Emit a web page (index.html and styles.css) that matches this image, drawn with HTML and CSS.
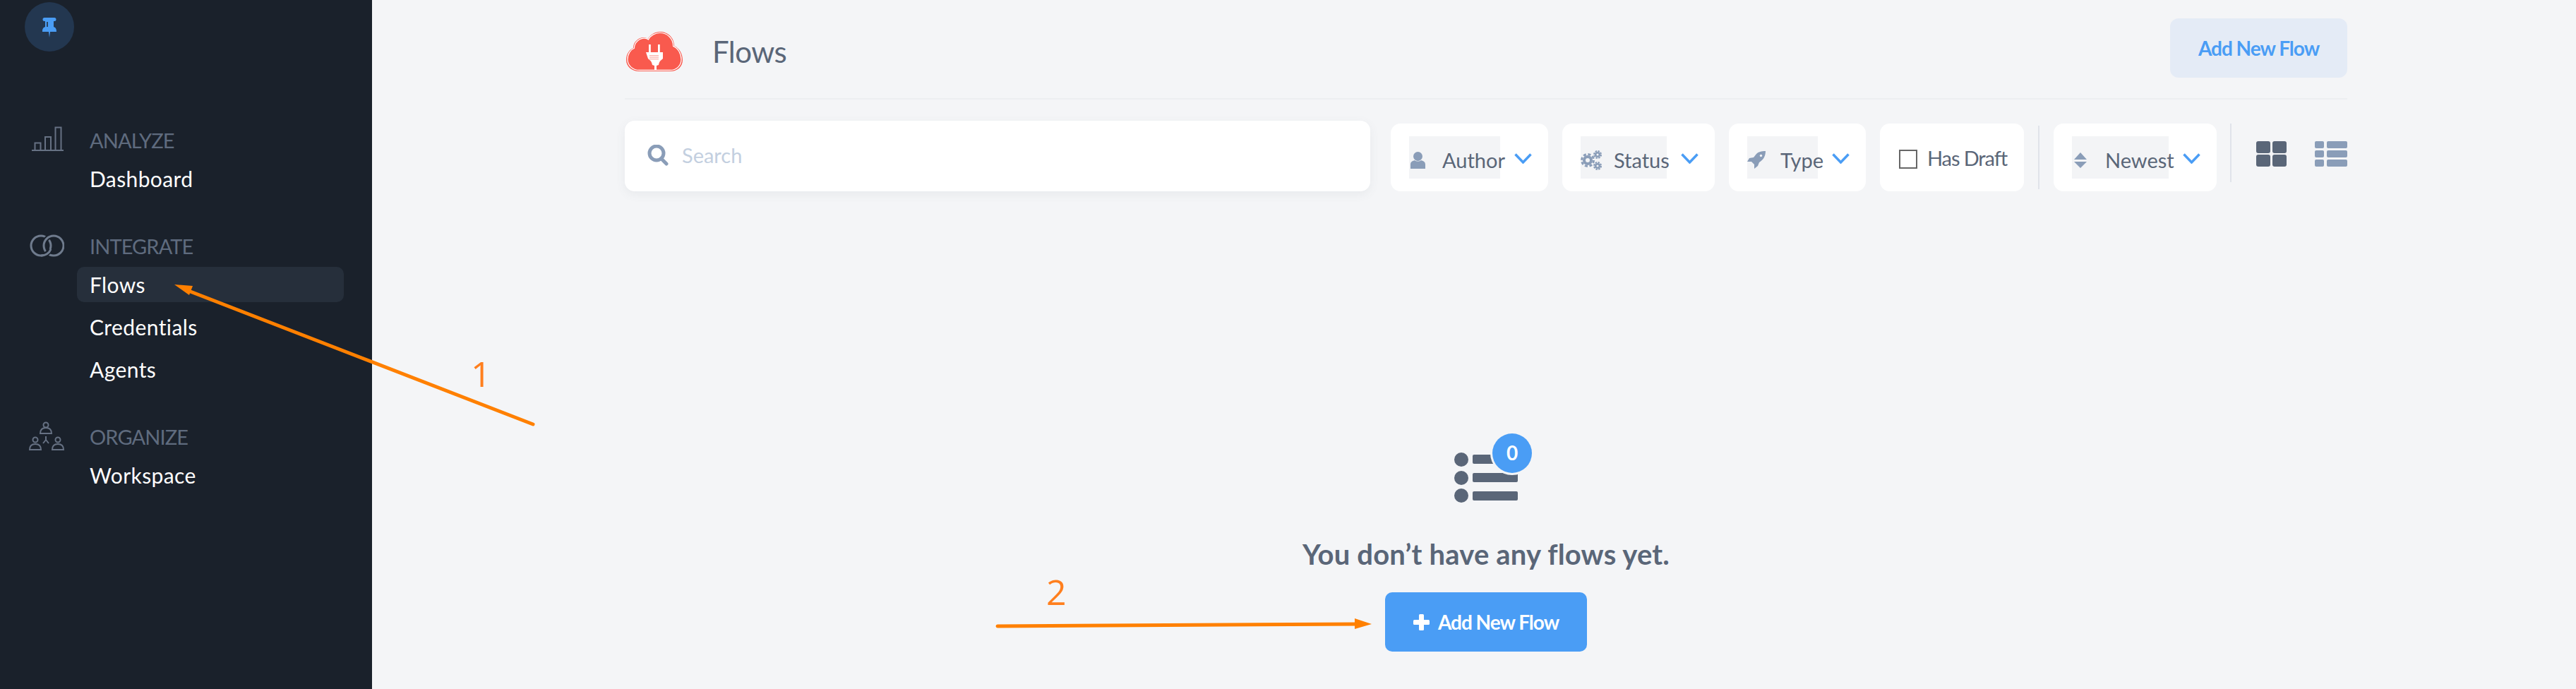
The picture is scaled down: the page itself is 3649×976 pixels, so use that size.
FILE: index.html
```html
<!DOCTYPE html>
<html lang="en">
<head>
    <meta charset="UTF-8">
    <title>Flows</title>
    <link rel="stylesheet" href="styles.css">
</head>
<body>
    <div class="app">
        <aside class="sidebar">
            <div class="logo">
                <svg width="70" height="70" viewBox="0 0 70 70"><path fill="#4a9df5" d="M28 22h14a1.500 1.500 0 0 1 0 5h-1v8c3 1 4 3 4 7H36l-1 8-1-8H25c0-4 1-6 4-7v-8h-1a1.500 1.500 0 0 1 0-5z"/><path fill="#2a4463" d="M31 28h2v7h-2z"/></svg>
            </div>
            <nav class="nav">
                <div class="nav-label">
                    <span class="nav-icon">
                        <svg width="50" height="40" viewBox="0 0 50 40" fill="none" stroke="#667183" stroke-width="2"><path d="M4 35h45M8.500 34V24.500h8V34M23 34V16h8v18M37.500 34V2.500h8V34"/></svg>
                    </span>
                    <span class="nav-label-text">ANALYZE</span>
                </div>
                <a class="nav-item">Dashboard</a>

                <div class="nav-label group-gap">
                    <span class="nav-icon">
                        <svg width="50" height="40" viewBox="0 0 50 40" fill="none" stroke="#6f7b8d" stroke-width="3">
                            <circle cx="17" cy="20" r="14"/>
                            <path stroke="#1a212b" stroke-width="7" d="M31 6.600A14 14 0 0 0 22 15"/>
                            <circle cx="35" cy="20" r="14"/>
                            <path stroke="#1a212b" stroke-width="7" d="M30 25A14 14 0 0 1 21 33.400"/>
                            <path d="M31 25A14 14 0 0 1 17 34"/>
                        </svg>
                    </span>
                    <span class="nav-label-text">INTEGRATE</span>
                </div>
                <a class="nav-item active">Flows</a>
                <a class="nav-item">Credentials</a>
                <a class="nav-item">Agents</a>

                <div class="nav-label group-gap">
                    <span class="nav-icon">
                        <svg width="50" height="44" viewBox="0 0 50 44" fill="none" stroke="#667183" stroke-width="2"><circle cx="24" cy="6" r="3.500"/><path d="M16 18c0-7 4-8 8-8s8 1 8 8z"/><circle cx="9" cy="27" r="3.500"/><path d="M1 41c0-7 4-8 8-8s8 1 8 8z"/><circle cx="41" cy="27" r="3.500"/><path d="M33 41c0-7 4-8 8-8s8 1 8 8z"/><path d="M24 22v5l-4 5M24 27l4 5"/></svg>
                    </span>
                    <span class="nav-label-text">ORGANIZE</span>
                </div>
                <a class="nav-item">Workspace</a>
            </nav>
        </aside>

        <main class="main">
            <header class="page-header">
                <div class="page-title">
                    <svg class="cloud" width="80" height="56" viewBox="0 0 80 56">
                        <path fill="#f95a4e" d="M18 56C8 56 0 49 0 40 0 31 5 25 10 23 10 14 18 8 25 8c2 0 5 1 6 2C34 4 41 0 48 0c11 0 20 8 20 20 7 3 12 11 12 20 0 9-7 16-17 16z"/>
                        <path fill="none" stroke="#fff" stroke-width="1.300" transform="translate(1.900 1.500) scale(.952 .946)" d="M18 56C8 56 0 49 0 40 0 31 5 25 10 23 10 14 18 8 25 8c2 0 5 1 6 2C34 4 41 0 48 0c11 0 20 8 20 20 7 3 12 11 12 20 0 9-7 16-17 16z"/>
                        <path fill="#fff" d="M32 18h2.800v11H32zM45 18h2.800v11H45zM28 29h24v9c-2 2-5 3-6 9l-3 1v7h-3v-7l-3-1c-1-6-4-7-6-9z"/>
                        <path fill="#fbb3ac" d="M33 33h13v1.300H33zM33 35.500h13v1.300H33zM33 38h13v1.300H33z"/>
                    </svg>
                    <h1>Flows</h1>
                </div>
                <button class="btn-soft">Add New Flow</button>
            </header>

            <div class="toolbar">
                <div class="search">
                    <svg width="30" height="30" viewBox="0 0 30 30" fill="none" stroke="#8a9db8" stroke-width="5"><circle cx="13" cy="12" r="10"/><path stroke-linecap="round" d="M20 20l7 7"/></svg>
                    <span class="search-text">Search</span>
                </div>

                <div class="filter">
                    <div class="filter-box author">
                        <span class="filter-icon">
                            <svg class="pad-2" width="21" height="24" viewBox="0 0 21 24" fill="#8a9db8"><ellipse cx="10.500" cy="6.500" rx="6.500" ry="6.500"/><path d="M0 24v-6c0-4 3-5 6-6 2 2 7 2 9 0 3 1 6 2 6 6v6z"/></svg>
                        </span>
                        <span>Author</span>
                    </div>
                    <svg class="chevron" width="25" height="15" viewBox="0 0 25 15"><path d="M1.500 1.500l11 11.500 11-11.500"/></svg>
                </div>

                <div class="filter">
                    <div class="filter-box status">
                        <span class="filter-icon">
                            <svg width="31" height="28" viewBox="0 0 31 28" fill="none" stroke="#8a9db8">
                                <circle cx="10" cy="14" r="5" stroke-width="4"/>
                                <circle cx="10" cy="14" r="8.500" stroke-width="3" stroke-dasharray="4 2.700"/>
                                <circle cx="24" cy="6" r="2.800" stroke-width="2.600"/>
                                <circle cx="24" cy="6" r="5" stroke-width="2" stroke-dasharray="2.500 1.400"/>
                                <circle cx="24" cy="22" r="2.800" stroke-width="2.600"/>
                                <circle cx="24" cy="22" r="5" stroke-width="2" stroke-dasharray="2.500 1.400"/>
                            </svg>
                        </span>
                        <span>Status</span>
                    </div>
                    <svg class="chevron" width="25" height="15" viewBox="0 0 25 15"><path d="M1.500 1.500l11 11.500 11-11.500"/></svg>
                </div>

                <div class="filter">
                    <div class="filter-box type">
                        <span class="filter-icon">
                            <svg width="27" height="25" viewBox="0 0 27 25" fill="#8a9db8"><path d="M26 0C20 0 16 1 13 4L9 9 3 10 0 15h6l4 4v6l5-4 2-5c5-3 9-8 9-16z"/><circle cx="19.500" cy="6.500" r="1.700" fill="#f3f4f6"/></svg>
                        </span>
                        <span>Type</span>
                    </div>
                    <svg class="chevron" width="25" height="15" viewBox="0 0 25 15"><path d="M1.500 1.500l11 11.500 11-11.500"/></svg>
                </div>

                <label class="draft">
                    <span class="checkbox"></span>
                    <span class="draft-text">Has Draft</span>
                </label>

                <span class="divider"></span>

                <div class="filter">
                    <div class="filter-box newest">
                        <span class="filter-icon">
                            <svg class="pad-3" width="18" height="22" viewBox="0 0 18 22" fill="#8a9db8"><path d="M9 0l9 10H0zM0 13h18l-9 9z"/></svg>
                        </span>
                        <span>Newest</span>
                    </div>
                    <svg class="chevron" width="25" height="15" viewBox="0 0 25 15"><path d="M1.500 1.500l11 11.500 11-11.500"/></svg>
                </div>

                <span class="divider short"></span>

                <svg class="view-grid" width="43" height="36" viewBox="0 0 43 36" fill="#5a6678">
                    <rect width="20" height="17" rx="3"/><rect x="23" width="20" height="17" rx="3"/>
                    <rect y="19" width="20" height="17" rx="3"/><rect x="23" y="19" width="20" height="17" rx="3"/>
                </svg>
                <svg class="view-list" width="46" height="36" viewBox="0 0 46 36" fill="#8a9db8">
                    <rect width="13" height="10" rx="2"/><rect x="17" width="29" height="10" rx="2"/>
                    <rect y="13" width="13" height="10" rx="2"/><rect x="17" y="13" width="29" height="10" rx="2"/>
                    <rect y="26" width="13" height="10" rx="2"/><rect x="17" y="26" width="29" height="10" rx="2"/>
                </svg>
            </div>

            <section class="empty">
                <div class="empty-icon">
                    <svg width="90" height="71" viewBox="0 0 90 71" fill="#5a6678">
                        <circle cx="10" cy="10" r="10"/><circle cx="10" cy="36" r="10"/><circle cx="10" cy="61" r="10"/>
                        <rect x="26" y="3" width="64" height="13" rx="2"/><rect x="26" y="29" width="64" height="13" rx="2"/><rect x="26" y="55" width="64" height="13" rx="2"/>
                    </svg>
                    <span class="badge">0</span>
                </div>
                <h2>You don’t have any flows yet.</h2>
                <button class="btn-primary">
                    <svg width="23" height="23" viewBox="0 0 23 23" fill="#fff"><rect x="8" width="7" height="23" rx="1.500"/><rect y="8" width="23" height="7" rx="1.500"/></svg>
                    Add New Flow
                </button>
            </section>
        </main>
    </div>

    <svg class="arrows" width="3649" height="976" viewBox="0 0 3649 976">
        <path class="arrow-line" d="M755 601L262 410"/>
        <path class="arrow-head" d="M247 403l26 2-5 13z"/>
        <path class="arrow-line" d="M1413 887L1925 884"/>
        <path class="arrow-head" d="M1943 884l-24-8v15z"/>
    </svg>
    <span class="step step-one">1</span>
    <span class="step step-two">2</span>
</body>
</html>
```

FILE: styles.css
```css
* {
    box-sizing: border-box;
}

html, body {
    margin: 0;
    height: 976px;
    overflow: hidden;
}

body {
    position: relative;
    font-family: Lato, "Open Sans", sans-serif;
    font-size: 29px;
    color: #5a6678;
    background-color: #f4f5f7;
}

.app {
    display: flex;
    height: 976px;
}

/* sidebar */
.sidebar {
    width: 527px;
    flex-shrink: 0;
    background-color: #1a212b;
    padding-top: 3px;
}

.logo {
    width: 70px;
    height: 70px;
    margin-left: 35px;
    border-radius: 50%;
    background-color: #233750;
}

.logo svg {
    display: block;
}

.nav {
    padding-top: 105px;
    display: flex;
    flex-direction: column;
    gap: 10px;
}

.nav-label {
    display: flex;
    align-items: center;
    height: 40px;
    padding-left: 41px;
    color: #5f6b7e;
}

.nav-label-text {
    letter-spacing: -0.9px;
}

.nav-label.group-gap {
    margin-top: 40px;
}

.nav-icon {
    display: flex;
    width: 86px;
    flex-shrink: 0;
}

.nav-item {
    display: block;
    height: 50px;
    line-height: 50px;
    width: 378px;
    margin-left: 109px;
    padding-left: 18px;
    color: #fff;
    font-size: 30px;
    letter-spacing: 0.4px;
    border-radius: 10px;
}

.nav-item.active {
    background-color: #262f3b;
}

/* header */
.main {
    flex: 1;
    padding: 0 324px 0 358px;
}

.page-header {
    display: flex;
    justify-content: space-between;
    align-items: flex-start;
    height: 141px;
    padding-top: 26px;
    border-bottom: 2px solid #eceef1;
}

.page-title {
    display: flex;
    align-items: center;
    gap: 42px;
    padding: 19px 0 0 2px;
}

.cloud {
    display: block;
}

h1 {
    margin: 0;
    font-size: 42px;
    font-weight: 400;
    line-height: 56px;
    letter-spacing: -0.5px;
}

.btn-soft {
    width: 251px;
    height: 84px;
    border: none;
    border-radius: 12px;
    background-color: #e4ebf6;
    color: #4a9df5;
    font-family: inherit;
    font-size: 28px;
    font-weight: 700;
    letter-spacing: -1px;
}

/* toolbar */
.toolbar {
    display: flex;
    align-items: flex-end;
    padding-top: 30px;
}

.search {
    display: flex;
    align-items: center;
    gap: 19px;
    width: 1056px;
    height: 100px;
    padding: 0 0 3px 32px;
    margin-right: 29px;
    background-color: #fff;
    border-radius: 14px;
    box-shadow: 0 4px 14px rgba(90, 102, 120, 0.08);
    color: #c3cfdf;
}

.filter {
    display: flex;
    align-items: center;
    height: 96px;
    padding: 0 23px 0 26px;
    margin-right: 20px;
    background-color: #fff;
    border-radius: 14px;
}

.filter-box {
    display: flex;
    align-items: center;
    height: 60px;
    padding-top: 7px;
    background-color: #f3f4f6;
    white-space: nowrap;
}

.filter-box.author { width: 129px; }
.filter-box.status { width: 122px; }
.filter-box.type { width: 100px; }
.filter-box.newest { width: 137px; }

.filter-icon {
    display: flex;
    width: 47px;
    flex-shrink: 0;
}

.pad-2 { margin-left: 2px; }
.pad-3 { margin-left: 3px; }

.chevron {
    flex-shrink: 0;
    margin-left: 20px;
    margin-top: 3px;
    fill: none;
    stroke: #4a9df5;
    stroke-width: 3.500;
}

.draft {
    display: flex;
    align-items: center;
    gap: 14px;
    width: 204px;
    height: 96px;
    padding-left: 27px;
    background-color: #fff;
    border-radius: 14px;
}

.draft-text {
    letter-spacing: -1.1px;
}

.checkbox {
    width: 26px;
    height: 27px;
    margin-top: 5px;
    border: 2px solid #666;
    background-color: #fff;
}

.divider {
    width: 2px;
    height: 90px;
    margin: 0 20px 3px 20px;
    background-color: #e0e3ea;
}

.divider.short {
    height: 83px;
    margin: 0 35px 13px -1px;
}

.view-grid {
    margin: 0 40px 35px 0;
}

.view-list {
    margin-bottom: 35px;
}

/* empty state */
.empty {
    display: flex;
    flex-direction: column;
    align-items: center;
    padding-top: 370px;
}

.empty-icon {
    position: relative;
    width: 90px;
    height: 71px;
}

.empty-icon svg {
    display: block;
}

.badge {
    position: absolute;
    left: 54px;
    top: -27px;
    width: 56px;
    height: 56px;
    line-height: 54px;
    text-align: center;
    border-radius: 50%;
    background-color: #4a9df5;
    box-shadow: 0 0 0 3px #f4f5f7;
    color: #fff;
    font-size: 28px;
    font-weight: 700;
}

h2 {
    margin: 43px 0 0;
    height: 60px;
    line-height: 60px;
    font-size: 40px;
    font-weight: 700;
    letter-spacing: 0.18px;
}

.btn-primary {
    display: flex;
    align-items: center;
    justify-content: center;
    gap: 12px;
    width: 286px;
    height: 84px;
    margin-top: 24px;
    border: none;
    border-radius: 10px;
    background-color: #4a9df5;
    color: #fff;
    font-family: inherit;
    font-size: 28px;
    font-weight: 700;
    letter-spacing: -1px;
}

/* screenshot annotations */
.arrows {
    position: absolute;
    left: 0;
    top: 0;
    pointer-events: none;
}

.arrow-line {
    fill: none;
    stroke: #ff8000;
    stroke-width: 5;
    stroke-linecap: round;
}

.arrow-head {
    fill: #ff8000;
}

.step {
    position: absolute;
    font-family: "Open Sans", sans-serif;
    font-size: 50px;
    line-height: 60px;
    color: #ff7f1e;
}

.step-one {
    left: 667px;
    top: 499px;
}

.step-two {
    left: 1482px;
    top: 808px;
}
```
